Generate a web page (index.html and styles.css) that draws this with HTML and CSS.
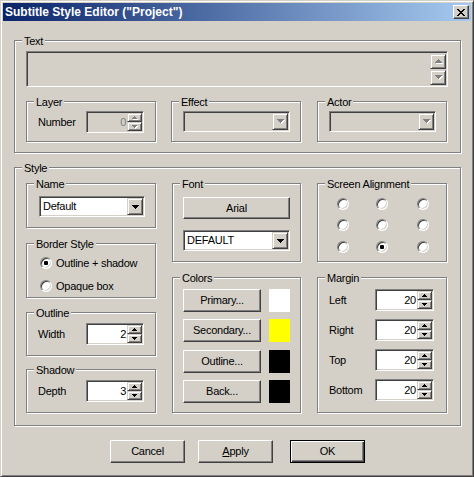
FILE: index.html
```html
<!DOCTYPE html>
<html>
<head>
<meta charset="utf-8">
<title>Subtitle Style Editor</title>
<link rel="stylesheet" href="styles.css">
</head>
<body>
<div class="window">
  <div class="titlebar">
    <span class="title">Subtitle Style Editor ("Project")</span>
    <span class="capbtn"><svg width="8" height="7" viewBox="0 0 8 7" shape-rendering="crispEdges"><path d="M0 0h2v1h-2zM6 0h2v1h-2zM1 1h2v1h-2zM5 1h2v1h-2zM2 2h4v1h-4zM3 3h2v1h-2zM2 4h4v1h-4zM1 5h2v1h-2zM5 5h2v1h-2zM0 6h2v1h-2zM6 6h2v1h-2z" fill="#000"/></svg></span>
  </div>
  <div class="client">
    <div class="group g-text">
      <span class="legend">Text</span>
      <div class="edit memo">
        <div class="vscroll">
          <span class="sbtn"><svg width="8" height="5" viewBox="0 0 8 5" shape-rendering="crispEdges"><path transform="translate(1 1)" d="M3 0h1v1h1v1h1v1h1v1h-7v-1h1v-1h1v-1h1z" fill="#fff"/><path d="M3 0h1v1h1v1h1v1h1v1h-7v-1h1v-1h1v-1h1z" fill="#808080"/></svg></span>
          <span class="sbtn"><svg width="8" height="5" viewBox="0 0 8 5" shape-rendering="crispEdges"><path transform="translate(1 1)" d="M0 0h7v1h-1v1h-1v1h-1v1h-1v-1h-1v-1h-1v-1h-1z" fill="#fff"/><path d="M0 0h7v1h-1v1h-1v1h-1v1h-1v-1h-1v-1h-1v-1h-1z" fill="#808080"/></svg></span>
        </div>
      </div>
      <div class="subrow">
        <div class="group g-small g-layer">
          <span class="legend">Layer</span>
          <span class="lbl">Number</span>
          <div class="edit spin dis">
            <span class="val">0</span>
            <span class="arrows">
              <span class="sp"><svg width="6" height="4" viewBox="0 0 6 4" shape-rendering="crispEdges"><path transform="translate(1 1)" d="M2 0h1v1h1v1h1v1h-5v-1h1v-1h1z" fill="#fff"/><path d="M2 0h1v1h1v1h1v1h-5v-1h1v-1h1z" fill="#808080"/></svg></span>
              <span class="sp"><svg width="6" height="4" viewBox="0 0 6 4" shape-rendering="crispEdges"><path transform="translate(1 1)" d="M0 0h5v1h-1v1h-1v1h-1v-1h-1v-1h-1z" fill="#fff"/><path d="M0 0h5v1h-1v1h-1v1h-1v-1h-1v-1h-1z" fill="#808080"/></svg></span>
            </span>
          </div>
        </div>
        <div class="group g-small g-effect">
          <span class="legend">Effect</span>
          <div class="edit combo dis">
            <span class="ctext"></span>
            <span class="dd"><svg width="8" height="5" viewBox="0 0 8 5" shape-rendering="crispEdges"><path transform="translate(1 1)" d="M0 0h7v1h-1v1h-1v1h-1v1h-1v-1h-1v-1h-1v-1h-1z" fill="#fff"/><path d="M0 0h7v1h-1v1h-1v1h-1v1h-1v-1h-1v-1h-1v-1h-1z" fill="#808080"/></svg></span>
          </div>
        </div>
        <div class="group g-small g-actor">
          <span class="legend">Actor</span>
          <div class="edit combo dis">
            <span class="ctext"></span>
            <span class="dd"><svg width="8" height="5" viewBox="0 0 8 5" shape-rendering="crispEdges"><path transform="translate(1 1)" d="M0 0h7v1h-1v1h-1v1h-1v1h-1v-1h-1v-1h-1v-1h-1z" fill="#fff"/><path d="M0 0h7v1h-1v1h-1v1h-1v1h-1v-1h-1v-1h-1v-1h-1z" fill="#808080"/></svg></span>
          </div>
        </div>
      </div>
    </div>

    <div class="group g-style">
      <span class="legend">Style</span>
      <div class="stylegrid">
        <div class="col">
          <div class="group g-name">
            <span class="legend">Name</span>
            <div class="edit combo name-combo">
              <span class="ctext">Default</span>
              <span class="dd"><svg width="7" height="4" viewBox="0 0 7 4" shape-rendering="crispEdges"><path d="M0 0h7v1h-1v1h-1v1h-1v1h-1v-1h-1v-1h-1v-1h-1z" fill="#000"/></svg></span>
            </div>
          </div>
          <div class="group g-border">
            <span class="legend">Border Style</span>
            <div class="radios">
              <div class="rrow"><span class="radio on"></span><span>Outline + shadow</span></div>
              <div class="rrow"><span class="radio"></span><span>Opaque box</span></div>
            </div>
          </div>
          <div class="group g-spin g-outline">
            <span class="legend">Outline</span>
            <span class="lbl">Width</span>
            <div class="edit spin">
              <span class="val">2</span>
              <span class="arrows">
                <span class="sp"><svg width="5" height="3" viewBox="0 0 5 3" shape-rendering="crispEdges"><path d="M2 0h1v1h1v1h1v1h-5v-1h1v-1h1z" fill="#000"/></svg></span>
                <span class="sp"><svg width="5" height="3" viewBox="0 0 5 3" shape-rendering="crispEdges"><path d="M0 0h5v1h-1v1h-1v1h-1v-1h-1v-1h-1z" fill="#000"/></svg></span>
              </span>
            </div>
          </div>
          <div class="group g-spin g-shadow">
            <span class="legend">Shadow</span>
            <span class="lbl">Depth</span>
            <div class="edit spin">
              <span class="val">3</span>
              <span class="arrows">
                <span class="sp"><svg width="5" height="3" viewBox="0 0 5 3" shape-rendering="crispEdges"><path d="M2 0h1v1h1v1h1v1h-5v-1h1v-1h1z" fill="#000"/></svg></span>
                <span class="sp"><svg width="5" height="3" viewBox="0 0 5 3" shape-rendering="crispEdges"><path d="M0 0h5v1h-1v1h-1v1h-1v-1h-1v-1h-1z" fill="#000"/></svg></span>
              </span>
            </div>
          </div>
        </div>

        <div class="col">
          <div class="group g-font">
            <span class="legend">Font</span>
            <div class="btn font-btn">Arial</div>
            <div class="edit combo font-combo">
              <span class="ctext">DEFAULT</span>
              <span class="dd"><svg width="7" height="4" viewBox="0 0 7 4" shape-rendering="crispEdges"><path d="M0 0h7v1h-1v1h-1v1h-1v1h-1v-1h-1v-1h-1v-1h-1z" fill="#000"/></svg></span>
            </div>
          </div>
          <div class="group g-colors">
            <span class="legend">Colors</span>
            <div class="crow"><div class="btn cbtn">Primary...</div><span class="swatch sw-white"></span></div>
            <div class="crow"><div class="btn cbtn">Secondary...</div><span class="swatch sw-yellow"></span></div>
            <div class="crow r3"><div class="btn cbtn">Outline...</div><span class="swatch sw-black"></span></div>
            <div class="crow"><div class="btn cbtn">Back...</div><span class="swatch sw-black"></span></div>
          </div>
        </div>

        <div class="col">
          <div class="group g-align">
            <span class="legend">Screen Alignment</span>
            <div class="aligngrid">
              <span class="radio"></span><span class="radio"></span><span class="radio"></span>
              <span class="radio"></span><span class="radio"></span><span class="radio"></span>
              <span class="radio"></span><span class="radio on"></span><span class="radio"></span>
            </div>
          </div>
          <div class="group g-margin">
            <span class="legend">Margin</span>
            <div class="mrow"><span class="mlbl">Left</span><div class="edit spin mspin"><span class="val">20</span><span class="arrows"><span class="sp"><svg width="5" height="3" viewBox="0 0 5 3" shape-rendering="crispEdges"><path d="M2 0h1v1h1v1h1v1h-5v-1h1v-1h1z" fill="#000"/></svg></span><span class="sp"><svg width="5" height="3" viewBox="0 0 5 3" shape-rendering="crispEdges"><path d="M0 0h5v1h-1v1h-1v1h-1v-1h-1v-1h-1z" fill="#000"/></svg></span></span></div></div>
            <div class="mrow"><span class="mlbl">Right</span><div class="edit spin mspin"><span class="val">20</span><span class="arrows"><span class="sp"><svg width="5" height="3" viewBox="0 0 5 3" shape-rendering="crispEdges"><path d="M2 0h1v1h1v1h1v1h-5v-1h1v-1h1z" fill="#000"/></svg></span><span class="sp"><svg width="5" height="3" viewBox="0 0 5 3" shape-rendering="crispEdges"><path d="M0 0h5v1h-1v1h-1v1h-1v-1h-1v-1h-1z" fill="#000"/></svg></span></span></div></div>
            <div class="mrow"><span class="mlbl">Top</span><div class="edit spin mspin"><span class="val">20</span><span class="arrows"><span class="sp"><svg width="5" height="3" viewBox="0 0 5 3" shape-rendering="crispEdges"><path d="M2 0h1v1h1v1h1v1h-5v-1h1v-1h1z" fill="#000"/></svg></span><span class="sp"><svg width="5" height="3" viewBox="0 0 5 3" shape-rendering="crispEdges"><path d="M0 0h5v1h-1v1h-1v1h-1v-1h-1v-1h-1z" fill="#000"/></svg></span></span></div></div>
            <div class="mrow"><span class="mlbl">Bottom</span><div class="edit spin mspin"><span class="val">20</span><span class="arrows"><span class="sp"><svg width="5" height="3" viewBox="0 0 5 3" shape-rendering="crispEdges"><path d="M2 0h1v1h1v1h1v1h-5v-1h1v-1h1z" fill="#000"/></svg></span><span class="sp"><svg width="5" height="3" viewBox="0 0 5 3" shape-rendering="crispEdges"><path d="M0 0h5v1h-1v1h-1v1h-1v-1h-1v-1h-1z" fill="#000"/></svg></span></span></div></div>
          </div>
        </div>
      </div>
    </div>

    <div class="actions">
      <div class="btn act-btn">Cancel</div>
      <div class="btn act-btn apply"><span><u>A</u>pply</span></div>
      <div class="btn act-btn ok">OK</div>
    </div>
  </div>
</div>
</body>
</html>
```

FILE: styles.css
```css
* { box-sizing: border-box; }
html, body { margin: 0; padding: 0; }
body {
  background: #d4d0c8;
  font-family: "Liberation Sans", Arial, sans-serif;
  font-size: 11px;
  line-height: 13px;
  color: #000;
  letter-spacing: -0.25px;
}

/* window frame */
.window {
  width: 474px;
  height: 477px;
  border: 1px solid;
  border-color: #d4d0c8 #404040 #404040 #d4d0c8;
  box-shadow: inset 1px 1px #fff, inset -1px -1px #808080;
  padding: 2px;
  background: #d4d0c8;
  display: flex;
  flex-direction: column;
}
.titlebar {
  height: 18px;
  flex: none;
  background: linear-gradient(to right, #0a246a, #a6caf0);
  display: flex;
  align-items: center;
  justify-content: space-between;
  padding: 0 2px;
}
.title {
  color: #fff;
  font-weight: bold;
  font-size: 12px;
  line-height: 18px;
  letter-spacing: 0;
  white-space: nowrap;
}
.capbtn {
  width: 16px;
  height: 14px;
  border: 1px solid;
  border-color: #fff #404040 #404040 #fff;
  box-shadow: inset -1px -1px #808080;
  background: #d4d0c8;
  display: flex;
  align-items: center;
  justify-content: center;
}
.capbtn svg { display: block; margin-left: -1px; }

.client { padding: 19px 0 0 11px; }

/* etched group boxes */
.group {
  position: relative;
  border: 1px solid #808080;
  box-shadow: inset 1px 1px #fff, 1px 1px #fff;
}
.legend {
  position: absolute;
  top: -6px;
  left: 7px;
  padding: 0 2px;
  background: #d4d0c8;
  line-height: 13px;
  white-space: nowrap;
}

/* sunken field */
.edit {
  border: 1px solid;
  border-color: #808080 #fff #fff #808080;
  box-shadow: inset 1px 1px #404040, inset -1px -1px #d4d0c8;
  background: #fff;
  padding: 1px;
}
.edit.dis, .edit.memo { background: #d4d0c8; }

/* raised small buttons (scroll / spin / dropdown) */
.sbtn, .sp, .dd {
  border: 1px solid;
  border-color: #d4d0c8 #404040 #404040 #d4d0c8;
  box-shadow: inset 1px 1px #fff, inset -1px -1px #808080;
  background: #d4d0c8;
  display: flex;
  align-items: center;
  justify-content: center;
}
svg { display: block; }

/* push button */
.btn {
  border: 1px solid;
  border-color: #fff #404040 #404040 #fff;
  box-shadow: inset -1px -1px #808080;
  background: #d4d0c8;
  display: flex;
  align-items: center;
  justify-content: center;
  white-space: nowrap;
}

/* Text group */
.g-text {
  width: 447px;
  height: 113px;
  padding: 10px 0 0 11px;
}
.memo {
  width: 422px;
  height: 36px;
  display: flex;
  justify-content: flex-end;
}
.vscroll {
  width: 16px;
  display: flex;
  flex-direction: column;
  gap: 1px;
  padding-top: 1px;
}
.sbtn { height: 15px; }
.sbtn svg { margin-left: 1px; }

.subrow {
  margin-top: 14px;
  display: flex;
}
.g-small {
  width: 130px;
  height: 41px;
  padding: 9px 0 0 11px;
  display: flex;
  align-items: flex-start;
}
.g-layer { margin-right: 15px; }
.g-effect { margin-right: 16px; }

.lbl {
  width: 48px;
  line-height: 22px;
  flex: none;
}

/* spin edit */
.spin {
  width: 58px;
  height: 22px;
  display: flex;
  flex: none;
}
.spin .val {
  flex: 1;
  text-align: right;
  line-height: 18px;
  padding-right: 1px;
}
.spin.dis .val { color: #808080; }
.arrows {
  width: 15px;
  display: flex;
  flex-direction: column;
}
.sp { flex: 1; }

/* combo */
.combo {
  width: 107px;
  height: 21px;
  display: flex;
}
.ctext {
  flex: 1;
  line-height: 17px;
  padding-left: 2px;
  white-space: nowrap;
}
.dd { width: 16px; }
.dd svg { margin-left: 1px; }
.name-combo { width: 106px; }

/* Style group */
.g-style {
  width: 447px;
  height: 259px;
  margin-top: 14px;
  padding: 15px 0 0 11px;
}
.stylegrid {
  display: grid;
  grid-template-columns: 130px 129px 130px;
  column-gap: 16px;
  align-items: start;
}
.col { display: flex; flex-direction: column; }

.g-name { height: 45px; padding: 12px 0 0 12px; }
.g-border { height: 55px; margin-top: 15px; padding: 13px 0 0 13px; }
.g-outline { margin-top: 14px; }
.g-shadow { margin-top: 13px; }
.g-spin {
  height: 44px;
  padding: 10px 0 0 11px;
  display: flex;
  align-items: flex-start;
}

.radios { display: flex; flex-direction: column; gap: 11px; }
.rrow {
  display: flex;
  align-items: center;
  gap: 4px;
  height: 12px;
  white-space: nowrap;
}
.radio {
  position: relative;
  flex: none;
  display: block;
  width: 12px;
  height: 12px;
  border-radius: 50%;
  border: 1px solid;
  border-color: #808080 #fff #fff #808080;
  box-shadow: inset 1px 1px #404040, inset -1px -1px #d4d0c8;
  background: #fff;
}
.radio.on::after {
  content: "";
  position: absolute;
  left: 3px;
  top: 3px;
  width: 4px;
  height: 4px;
  border-radius: 1px;
  background: #000;
}

.g-font { height: 79px; padding: 13px 0 0 10px; }
.font-btn { width: 107px; height: 22px; }
.font-combo { margin-top: 11px; }

.g-colors {
  height: 136px;
  margin-top: 15px;
  padding: 11px 0 0 10px;
  display: flex;
  flex-direction: column;
  gap: 7px;
}
.crow { display: flex; }
.crow.r3 { margin-top: 1px; }
.cbtn { width: 78px; height: 23px; }
.swatch { width: 21px; height: 23px; margin-left: 8px; display: block; }
.sw-white { background: #fff; }
.sw-yellow { background: #ffff00; }
.sw-black { background: #000; }

.g-align { height: 79px; padding: 14px 0 0 19px; }
.aligngrid {
  display: grid;
  grid-template-columns: 39px 41px 12px;
  grid-template-rows: 21px 22px 12px;
}

.g-margin {
  height: 136px;
  margin-top: 15px;
  padding: 11px 0 0 11px;
  display: flex;
  flex-direction: column;
  gap: 8px;
}
.mrow { display: flex; align-items: center; }
.mlbl { width: 46px; flex: none; }
.mspin { width: 59px; }

/* bottom buttons */
.actions {
  display: flex;
  margin-top: 14px;
  padding-left: 96px;
}
.act-btn { width: 75px; height: 23px; }
.apply { margin-left: 13px; }
.ok {
  margin-left: 17px;
  border: 1px solid #000;
  box-shadow: inset 1px 1px #fff, inset -1px -1px #404040, inset -2px -2px #808080;
}
```
